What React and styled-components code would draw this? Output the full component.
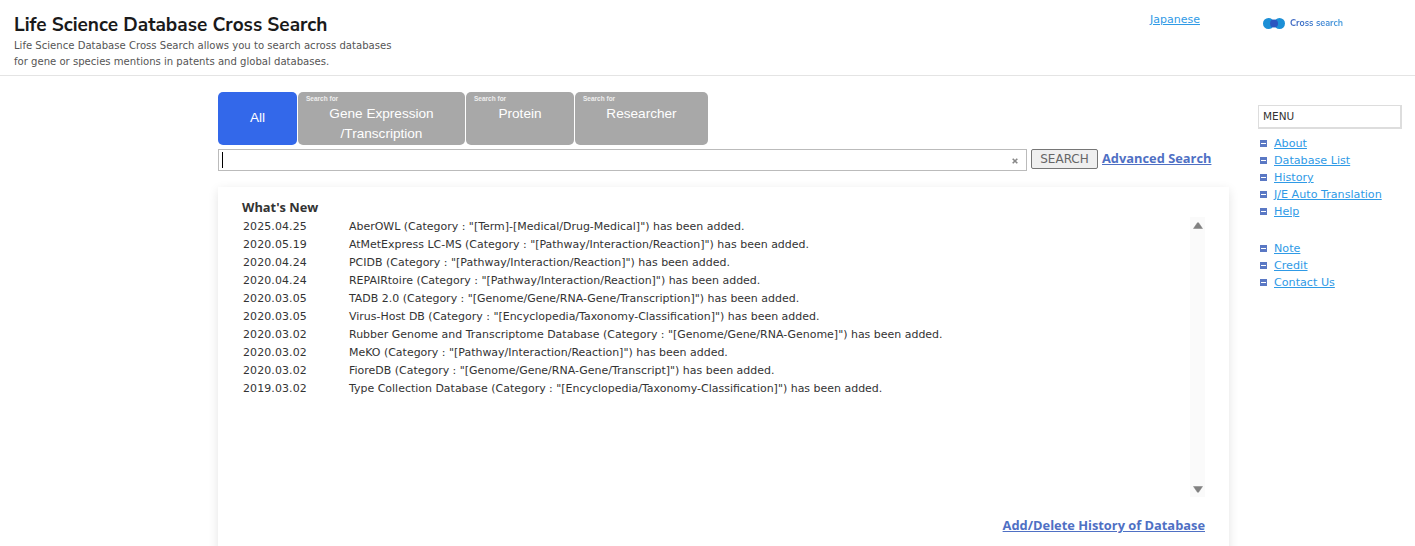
import styled, { createGlobalStyle } from 'styled-components';

const GlobalStyle = createGlobalStyle`
  html, body {
    margin: 0;
    padding: 0;
    background: #fff;
    color: #333;
    font-family: "DejaVu Sans", Verdana, sans-serif;
  }
`;

const Page = styled.div`
  width: 1415px;
  height: 546px;
  overflow: hidden;
`;

const Header = styled.header`
  display: flex;
  height: 75px;
  box-sizing: content-box;
  border-bottom: 1px solid #e4e4e4;
`;

const HeaderText = styled.div`
  width: 1135px;
  padding: 14px 0 0 14px;
  box-sizing: border-box;
`;

const Title = styled.h1`
  margin: 0;
  font: 700 19.05px/23px "Nunito Sans", Lato, "Open Sans", sans-serif;
  color: #1a1a1a;
`;

const Lead = styled.p`
  margin: 1px 0 0;
  font-size: 10.08px;
  line-height: 16px;
  color: #555;
`;

const LangLink = styled.a`
  margin: 13px 0 0 15px;
  height: 14px;
  font-size: 11px;
  line-height: 14px;
  color: #2f9ae6;
  text-decoration: underline;
`;

const Logo = styled.div`
  display: flex;
  align-items: center;
  gap: 5px;
  margin: 16px 0 0 63px;
  height: 14px;
  font: 700 9px/14px "Nunito Sans", Lato, sans-serif;
`;

const LogoText = styled.span`
  background: linear-gradient(90deg, #3a62c0, #4aa0e0);
  -webkit-background-clip: text;
  background-clip: text;
  color: transparent;
`;

const Main = styled.div`
  display: flex;
  padding-top: 16px;
`;

const Center = styled.main`
  width: 1011px;
  margin-left: 218px;
`;

const Tabs = styled.div`
  display: flex;
  gap: 1px;
`;

const Tab = styled.div`
  position: relative;
  width: ${(p) => p.$w}px;
  height: 53px;
  box-sizing: border-box;
  padding-top: ${(p) => (p.$active ? '16px' : '12px')};
  border-radius: 5px;
  background: ${(p) => (p.$active ? '#3368ea' : '#a8a8a8')};
  color: #fff;
  font: 13.6px/20px "Liberation Sans", Arial, sans-serif;
  text-align: center;
`;

const SearchFor = styled.span`
  position: absolute;
  left: 8px;
  top: 3px;
  font: 700 6.5px/8px "Liberation Sans", Arial, sans-serif;
  color: #eee;
`;

const SearchRow = styled.div`
  display: flex;
  align-items: flex-start;
  margin-top: 4px;
`;

const SearchBox = styled.div`
  display: flex;
  flex: none;
  align-items: center;
  justify-content: space-between;
  width: 809px;
  height: 22px;
  box-sizing: border-box;
  border: 1px solid #bbb;
  padding: 2px 8px 0 3px;
`;

const Caret = styled.span`
  width: 1px;
  height: 16px;
  margin-top: -2px;
  background: #000;
`;

const SearchButton = styled.button`
  flex: none;
  width: 67px;
  height: 20px;
  margin-left: 4px;
  padding: 0;
  border: 1px solid #767676;
  border-radius: 2px;
  background: #efefef;
  color: #666;
  font: 12px/18px "DejaVu Sans", sans-serif;
`;

const StrongLink = styled.a`
  font: 700 12.85px/18px "Open Sans", "DejaVu Sans", sans-serif;
  color: #4f70c4;
  text-decoration: underline;
`;

const AdvancedLink = styled(StrongLink)`
  margin-left: 4px;
  white-space: nowrap;
`;

const Panel = styled.section`
  margin-top: 16px;
  height: 380px;
  box-sizing: border-box;
  padding: 13px 24px 0;
  background: #fff;
  box-shadow: 0 3px 10px rgba(0, 0, 0, 0.11);
`;

const PanelTitle = styled.h2`
  margin: 0;
  font: 700 12.85px/15px "Open Sans", "DejaVu Sans", sans-serif;
  color: #333;
`;

const NewsArea = styled.div`
  display: flex;
  justify-content: space-between;
  height: 280px;
  margin-top: 2px;
`;

const NewsList = styled.ul`
  margin: 0;
  padding: 1px 0 0;
  list-style: none;
`;

const NewsRow = styled.li`
  display: flex;
  height: 18px;
  font-size: 10.98px;
  line-height: 18px;
  color: #333;
`;

const NewsDate = styled.span`
  width: 107px;
  padding-left: 1px;
  box-sizing: border-box;
  letter-spacing: 0.1px;
`;

const Scrollbar = styled.div`
  display: flex;
  flex-direction: column;
  justify-content: space-between;
  align-items: center;
  width: 15px;
  padding: 5px 0 4px;
  box-sizing: border-box;
  background: #fafafa;
`;

const PanelFooter = styled.div`
  margin-top: 18px;
  text-align: right;
`;

const Side = styled.aside`
  width: 144px;
  margin: 13px 0 0 29px;
`;

const MenuTitle = styled.div`
  height: 24px;
  box-sizing: border-box;
  border: 2px solid #ddd;
  border-width: 1px 2px 2px 1px;
  padding-left: 4px;
  font-size: 10.5px;
  line-height: 21px;
  color: #333;
`;

const MenuList = styled.ul`
  margin: ${(p) => p.$top}px 0 0;
  padding: 0;
  list-style: none;
`;

const MenuItem = styled.li`
  display: flex;
  align-items: center;
  height: 17px;
  padding-left: 2px;
  font-size: 11.15px;
  line-height: 17px;
`;

const Bullet = styled.span`
  display: flex;
  align-items: center;
  justify-content: center;
  width: 7px;
  height: 7px;
  margin-right: 7px;
  background: #5a78c4;

  &::after {
    content: '';
    width: 5px;
    height: 1px;
    background: #fff;
  }
`;

const MenuLink = styled.a`
  color: #2f9ae6;
  text-decoration: underline;
`;

const news = [
  ['2025.04.25', 'AberOWL (Category : "[Term]-[Medical/Drug-Medical]") has been added.'],
  ['2020.05.19', 'AtMetExpress LC-MS (Category : "[Pathway/Interaction/Reaction]") has been added.'],
  ['2020.04.24', 'PCIDB (Category : "[Pathway/Interaction/Reaction]") has been added.'],
  ['2020.04.24', 'REPAIRtoire (Category : "[Pathway/Interaction/Reaction]") has been added.'],
  ['2020.03.05', 'TADB 2.0 (Category : "[Genome/Gene/RNA-Gene/Transcription]") has been added.'],
  ['2020.03.05', 'Virus-Host DB (Category : "[Encyclopedia/Taxonomy-Classification]") has been added.'],
  ['2020.03.02', 'Rubber Genome and Transcriptome Database (Category : "[Genome/Gene/RNA-Genome]") has been added.'],
  ['2020.03.02', 'MeKO (Category : "[Pathway/Interaction/Reaction]") has been added.'],
  ['2020.03.02', 'FioreDB (Category : "[Genome/Gene/RNA-Gene/Transcript]") has been added.'],
  ['2019.03.02', 'Type Collection Database (Category : "[Encyclopedia/Taxonomy-Classification]") has been added.'],
];

const menuMain = ['About', 'Database List', 'History', 'J/E Auto Translation', 'Help'];
const menuSub = ['Note', 'Credit', 'Contact Us'];

const ScrollArrow = ({ down }) => (
  <svg width="10" height="7" viewBox="0 0 10 7">
    <path
      d={down ? 'M0.5 0.5H9.5L5.6 6.2H4.4Z' : 'M0.5 6.5H9.5L5.6 0.8H4.4Z'}
      fill="#808080"
      stroke="#808080"
      strokeWidth="0.5"
      strokeLinejoin="round"
    />
  </svg>
);

const App = () => {
  return (
    <Page>
      <GlobalStyle />
      <Header>
        <HeaderText>
          <Title>Life Science Database Cross Search</Title>
          <Lead>
            Life Science Database Cross Search allows you to search across databases
            <br />
            for gene or species mentions in patents and global databases.
          </Lead>
        </HeaderText>
        <LangLink href="#">Japanese</LangLink>
        <Logo>
          <svg width="22" height="11" viewBox="0 0 22 11">
            <circle cx="5.5" cy="5.5" r="5.5" fill="#1c8fd6" />
            <circle cx="16.5" cy="5.5" r="5.5" fill="#1c8fd6" />
            <circle cx="11" cy="5.5" r="4" fill="#2a55c0" />
          </svg>
          <LogoText>Cross search</LogoText>
        </Logo>
      </Header>
      <Main>
        <Center>
          <Tabs>
            <Tab $w={79} $active>All</Tab>
            <Tab $w={167}>
              <SearchFor>Search for</SearchFor>
              Gene Expression
              <br />
              /Transcription
            </Tab>
            <Tab $w={108}>
              <SearchFor>Search for</SearchFor>
              Protein
            </Tab>
            <Tab $w={133}>
              <SearchFor>Search for</SearchFor>
              Researcher
            </Tab>
          </Tabs>
          <SearchRow>
            <SearchBox>
              <Caret />
              <svg width="6" height="6" viewBox="0 0 6 6">
                <path d="M0.7 0.7L5.3 5.3M5.3 0.7L0.7 5.3" stroke="#888" strokeWidth="1.6" />
              </svg>
            </SearchBox>
            <SearchButton>SEARCH</SearchButton>
            <AdvancedLink href="#">Advanced Search</AdvancedLink>
          </SearchRow>
          <Panel>
            <PanelTitle>What's New</PanelTitle>
            <NewsArea>
              <NewsList>
                {news.map(([date, text]) => (
                  <NewsRow key={text}>
                    <NewsDate>{date}</NewsDate>
                    <span>{text}</span>
                  </NewsRow>
                ))}
              </NewsList>
              <Scrollbar>
                <ScrollArrow />
                <ScrollArrow down />
              </Scrollbar>
            </NewsArea>
            <PanelFooter>
              <StrongLink href="#">Add/Delete History of Database</StrongLink>
            </PanelFooter>
          </Panel>
        </Center>
        <Side>
          <MenuTitle>MENU</MenuTitle>
          <MenuList $top={6}>
            {menuMain.map((item) => (
              <MenuItem key={item}>
                <Bullet />
                <MenuLink href="#">{item}</MenuLink>
              </MenuItem>
            ))}
          </MenuList>
          <MenuList $top={20}>
            {menuSub.map((item) => (
              <MenuItem key={item}>
                <Bullet />
                <MenuLink href="#">{item}</MenuLink>
              </MenuItem>
            ))}
          </MenuList>
        </Side>
      </Main>
    </Page>
  );
};

export default App;
